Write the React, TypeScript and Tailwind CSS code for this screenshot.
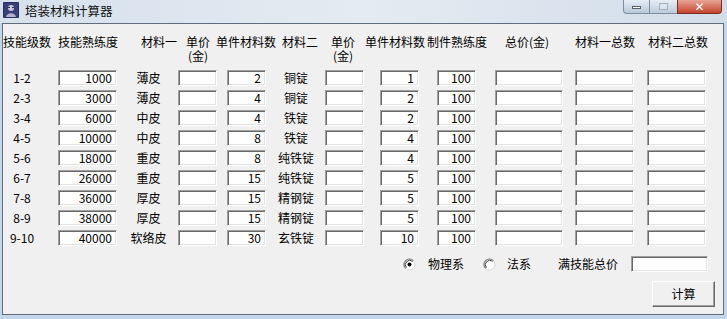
import React from "react";

type Row = {
  lv: string;
  exp: string;
  mat1: string;
  n1: string;
  mat2: string;
  n2: string;
  craft: string;
};

const rows: Row[] = [
  { lv: "1-2", exp: "1000", mat1: "薄皮", n1: "2", mat2: "铜锭", n2: "1", craft: "100" },
  { lv: "2-3", exp: "3000", mat1: "薄皮", n1: "4", mat2: "铜锭", n2: "2", craft: "100" },
  { lv: "3-4", exp: "6000", mat1: "中皮", n1: "4", mat2: "铁锭", n2: "2", craft: "100" },
  { lv: "4-5", exp: "10000", mat1: "中皮", n1: "8", mat2: "铁锭", n2: "4", craft: "100" },
  { lv: "5-6", exp: "18000", mat1: "重皮", n1: "8", mat2: "纯铁锭", n2: "4", craft: "100" },
  { lv: "6-7", exp: "26000", mat1: "重皮", n1: "15", mat2: "纯铁锭", n2: "5", craft: "100" },
  { lv: "7-8", exp: "36000", mat1: "厚皮", n1: "15", mat2: "精钢锭", n2: "5", craft: "100" },
  { lv: "8-9", exp: "38000", mat1: "厚皮", n1: "15", mat2: "精钢锭", n2: "5", craft: "100" },
  { lv: "9-10", exp: "40000", mat1: "软络皮", n1: "30", mat2: "玄铁锭", n2: "10", craft: "100" },
];

// classic sunken text box
function Box({ className = "", value = "" }: { className?: string; value?: string }) {
  return (
    <div
      className={`h-[16px] shrink-0 bg-white border border-t-[#a0a0a0] border-l-[#a0a0a0] border-r-white border-b-white shadow-[inset_1px_1px_0_#696969,inset_-1px_-1px_0_#e3e3e3] text-right pr-[4px] leading-[14px] text-[12px] ${className}`}
    >
      {value}
    </div>
  );
}

function Radio({ checked }: { checked?: boolean }) {
  return (
    <svg width="13" height="13" viewBox="0 0 13 13" className="shrink-0">
      <circle cx="6.5" cy="6.5" r="5.5" fill="#fff" stroke="#d4d4d4" />
      <path d="M2.6 10.4 A5.5 5.5 0 0 1 10.4 2.6" fill="none" stroke="#808080" strokeWidth="1.2" />
      <path d="M3.4 9.6 A4.4 4.4 0 0 1 9.6 3.4" fill="none" stroke="#404040" strokeWidth="1" />
      {checked && <circle cx="6.5" cy="6.5" r="2" fill="#000" />}
    </svg>
  );
}

// two-line header like 单价 / (金)
function Price({ className = "" }: { className?: string }) {
  return (
    <div className={`w-[24px] shrink-0 flex flex-col items-center ${className}`}>
      <div className="leading-[13px]">单价</div>
      <div className="leading-[13px] mt-[1px]">(金)</div>
    </div>
  );
}

export default function App() {
  return (
    <div className="w-[727px] h-[319px] overflow-hidden bg-[#c4d6ea] font-['Noto_Sans_CJK_SC',sans-serif] text-black">
      {/* title bar */}
      <div className="h-[23px] flex items-start bg-gradient-to-r from-[#d6e1ec] via-[#e4ebf2] to-[#d2dde9]">
        <div className="mt-[2px] ml-[3px] w-[16px] h-[16px]">
          <svg width="16" height="16" viewBox="0 0 16 16">
            <rect x="0" y="0" width="16" height="16" rx="1" fill="#2b2f5e" />
            <rect x="1" y="1" width="14" height="14" fill="#3a3f78" />
            <circle cx="8" cy="6" r="3" fill="#c9c7d8" />
            <path d="M3 15 C4 10 12 10 13 15 Z" fill="#b4b2cc" />
            <rect x="5" y="5" width="2" height="1" fill="#2b2f5e" />
            <rect x="9" y="5" width="2" height="1" fill="#2b2f5e" />
          </svg>
        </div>
        <div className="ml-[6px] mt-[3px] text-[12.5px] leading-[16px] text-[#111]">塔装材料计算器</div>
        <div className="ml-auto mr-[5px] flex h-[14px]">
          <div className="w-[27px] h-[14px] rounded-bl-[4px] border border-[#7d8ea3] border-t-0 bg-gradient-to-b from-[#e6edf5] to-[#b9c8d9] flex items-center justify-center">
            <div className="w-[9px] h-[3px] bg-white border border-[#55606d] mt-[2px]" />
          </div>
          <div className="w-[27px] h-[14px] border-b border-[#7d8ea3] bg-gradient-to-b from-[#e6edf5] to-[#bccbdb] flex items-center justify-center">
            <div className="w-[9px] h-[7px] border border-[#9aa6b4] bg-[#dfe6ee] opacity-80" />
          </div>
          <div className="w-[45px] h-[14px] rounded-br-[4px] border border-[#7b2b22] border-t-0 bg-gradient-to-b from-[#e8a595] to-[#c4412a] flex items-center justify-center text-white text-[12px] leading-[12px] font-bold font-['DejaVu_Sans',sans-serif]">
            ✕
          </div>
        </div>
      </div>

      {/* client area */}
      <div className="ml-[2px] w-[722px] h-[292px] border border-[#5f6d7d] bg-[#f0f0f0] text-[12px]">
        {/* header */}
        <div className="h-[44px] pt-[11px] flex items-start leading-[13px] whitespace-nowrap">
          <div className="w-[48px] shrink-0">技能级数</div>
          <div className="ml-[7px] w-[60px] shrink-0">技能熟练度</div>
          <div className="ml-[23px] w-[36px] shrink-0">材料一</div>
          <Price className="ml-[9px]" />
          <div className="ml-[6px] w-[60px] shrink-0">单件材料数</div>
          <div className="ml-[6px] w-[36px] shrink-0">材料二</div>
          <Price className="ml-[13px]" />
          <div className="ml-[10px] w-[60px] shrink-0">单件材料数</div>
          <div className="ml-[2px] w-[60px] shrink-0">制件熟练度</div>
          <div className="ml-[18px] w-[48px] shrink-0">总价(金)</div>
          <div className="ml-[22px] w-[60px] shrink-0">材料一总数</div>
          <div className="ml-[13px] w-[60px] shrink-0">材料二总数</div>
        </div>

        {/* rows */}
        {rows.map((r) => (
          <div key={r.lv} className="h-[20px] flex items-center whitespace-nowrap">
            <div className="w-[38px] shrink-0 text-center">{r.lv}</div>
            <Box className="ml-[17px] w-[59px]" value={r.exp} />
            <div className="ml-[8px] w-[47px] shrink-0 text-center">{r.mat1}</div>
            <Box className="ml-[6px] w-[39px]" />
            <Box className="ml-[10px] w-[39px]" value={r.n1} />
            <div className="ml-[10px] w-[40px] shrink-0 text-center">{r.mat2}</div>
            <Box className="ml-[9px] w-[39px]" />
            <Box className="ml-[16px] w-[39px]" value={r.n2} />
            <Box className="ml-[18px] w-[39px]" value={r.craft} />
            <Box className="ml-[19px] w-[68px]" />
            <Box className="ml-[12px] w-[59px]" />
            <Box className="ml-[13px] w-[59px]" />
          </div>
        ))}

        {/* options */}
        <div className="mt-[8px] h-[16px] flex items-center whitespace-nowrap">
          <div className="ml-[400px]">
            <Radio checked />
          </div>
          <div className="ml-[12px] w-[36px]">物理系</div>
          <div className="ml-[19px]">
            <Radio />
          </div>
          <div className="ml-[11px] w-[24px]">法系</div>
          <div className="ml-[27px] w-[60px]">满技能总价</div>
          <Box className="ml-[13px] w-[77px]" />
        </div>

        {/* button */}
        <div className="mt-[9px] flex">
          <button className="ml-[649px] w-[63px] h-[26px] bg-[#f0f0f0] border border-t-white border-l-white border-r-[#696969] border-b-[#696969] shadow-[inset_-1px_-1px_0_#a0a0a0] text-[12px] leading-[24px] text-center">
            计算
          </button>
        </div>
      </div>
    </div>
  );
}
